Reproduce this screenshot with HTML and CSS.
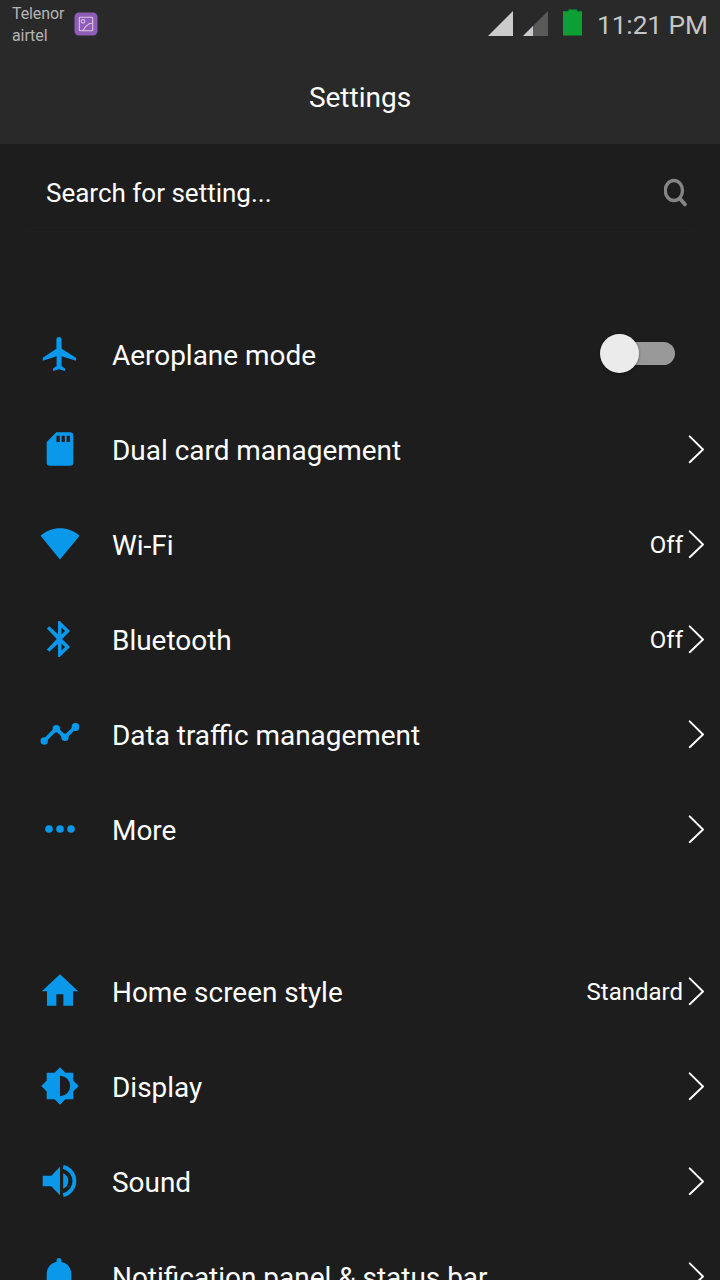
FILE: index.html
```
<!DOCTYPE html>
<html lang="en">
<head>
<meta charset="utf-8">
<title>Settings</title>
<link rel="stylesheet" href="styles.css">
</head>
<body>
<svg class="defs"><symbol id="chevron" viewBox="0 0 18 30"><path d="M1.700 1.300 15 14.500 1.700 27.200" fill="none" stroke="#fff" stroke-width="1.9" stroke-linecap="round" stroke-linejoin="round"/></symbol></svg>
<header class="header">
  <div class="status">
    <div class="carriers"><span>Telenor</span><span>airtel</span></div>
    <svg class="shot" viewBox="0 0 24 24"><rect x=".5" y=".5" width="23" height="23" rx="4.5" fill="#8f5cb9"/><g fill="none" stroke="#d6c8df" stroke-width="1.1"><rect x="5.3" y="5.3" width="13.4" height="13.4" rx=".8"/><circle cx="9" cy="9.3" r="1.8"/><path d="M9 18.5c.3-1 1.2-1 1.6-2.300C11 14 13 14.200 14 12.500 15 11.500 16.500 11.300 18.500 11.300"/></g></svg>
    <svg class="signal" viewBox="0 0 25 25"><path d="M25 0V25H0Z" fill="#cbcbcb"/></svg>
    <svg class="signal second" viewBox="0 0 25 25"><path d="M25 0V25H0Z" fill="#5b5a58"/><path d="M10 15V25H0Z" fill="#cbcbcb"/></svg>
    <svg class="battery" viewBox="0 0 19 27"><path d="M0 2.200H5.500V.4H14V2.200H19V26.500H0Z" fill="#0b9f34"/></svg>
    <span class="time">11:21 PM</span>
  </div>
  <h1 class="title">Settings</h1>
</header>
<div class="search">
  <span class="hint">Search for setting...</span>
  <svg class="glass" viewBox="0 0 24 30"><g fill="none" stroke="#858585"><ellipse cx="9.900" cy="12.500" rx="8.600" ry="10" stroke-width="3.300"/><path d="M15.800 20.500 20.900 26.300" stroke-width="4" stroke-linecap="round"/></g></svg>
</div>
<main>
  <section class="group">
    <div class="row"><svg class="icon" viewBox="0 0 40 41"><path d="M16.400 5.500C16.400 2.200 21.600 2.200 21.600 5.500V14.800L36 23.800V26.800L21.600 22.300V32L25 34.600V37L19 35.300 13 37V34.600L16.600 32V22.300L2.800 26.800V23.800L16.400 14.800Z"/></svg><span class="label">Aeroplane mode</span><span class="toggle"><span class="knob"></span></span></div>
    <div class="row"><svg class="icon" viewBox="0 0 40 41"><path fill-rule="evenodd" d="M16.300 3.300H30.300Q33.300 3.300 33.300 6.300V33.700Q33.300 36.700 30.300 36.700H9.700Q6.700 36.700 6.700 33.700V12.900ZM16.500 6.800V13H19.700V6.800ZM21.600 6.800V13H24.800V6.800ZM26.600 6.800V13H29.800V6.800Z"/></svg><span class="label">Dual card management</span><svg class="chevron"><use href="#chevron"/></svg></div>
    <div class="row"><svg class="icon" viewBox="0 0 40 41"><path d="M.600 11.700C11.500 1.700 28.500 1.700 39.600 11.700L20 35.400Z"/></svg><span class="label">Wi-Fi</span><span class="value">Off</span><svg class="chevron"><use href="#chevron"/></svg></div>
    <div class="row"><svg class="icon" viewBox="0 0 40 41"><path fill-rule="evenodd" d="M18 2H19.800L30 12.100 22.200 20 30 27.900 19.800 38H18V24.700L9.300 32.800 6.900 30.400 16.800 20 6.900 9.600 9.300 7.200 18 15.300ZM21.500 8.500V15.600L25.100 12.100ZM21.500 24.400V31.500L25.100 27.900Z"/></svg><span class="label">Bluetooth</span><span class="value">Off</span><svg class="chevron"><use href="#chevron"/></svg></div>
    <div class="row"><svg class="icon" viewBox="0 0 40 41"><path class="line" d="M4 27 16.300 14.700 25 23.300 35.300 13"/><circle cx="4.200" cy="27" r="3.700"/><circle cx="16.300" cy="14.700" r="3.700"/><circle cx="25" cy="23.300" r="3.700"/><circle cx="35.500" cy="13" r="3.900"/></svg><span class="label">Data traffic management</span><svg class="chevron"><use href="#chevron"/></svg></div>
    <div class="row"><svg class="icon" viewBox="0 0 40 41"><circle cx="9" cy="20" r="3.800"/><circle cx="20" cy="20" r="3.800"/><circle cx="31" cy="20" r="3.800"/></svg><span class="label">More</span><svg class="chevron"><use href="#chevron"/></svg></div>
  </section>
  <section class="group">
    <div class="row"><svg class="icon" viewBox="0 0 40 41"><path d="M20 3.300 38.200 20.200H33V34.800H23.400V23.300H16.400V34.800H7V20.200H1.800Z"/></svg><span class="label">Home screen style</span><span class="value">Standard</span><svg class="chevron"><use href="#chevron"/></svg></div>
    <div class="row"><svg class="icon" viewBox="0 0 40 41"><path fill-rule="evenodd" d="M20 1.300 25.400 6.700H33.300V14.600L38.700 20 33.300 25.400V33.300H25.400L20 38.700 14.600 33.300H6.700V25.400L1.300 20 6.700 14.600V6.700H14.600ZM20 9.800V30.200A10.200 10.200 0 0 0 20 9.800Z"/></svg><span class="label">Display</span><svg class="chevron"><use href="#chevron"/></svg></div>
    <div class="row"><svg class="icon" viewBox="0 0 40 41"><path d="M2.700 14.700H11.300L20 5.700V34.300L11.300 25.300H2.700ZM23.200 12.300Q28.300 14.800 28.300 20T23.200 27.700Z"/><path class="line" d="M23.200 5.800A14.600 14.600 0 0 1 23.200 34.200"/></svg><span class="label">Sound</span><svg class="chevron"><use href="#chevron"/></svg></div>
    <div class="row"><svg class="icon" viewBox="0 0 40 41"><path d="M16.500 6V4.500C16.500 1.200 21.500 1.200 21.500 4.500V6C27.500 7.300 31.300 12 31.300 18V28L35 32V34H3V32L6.700 28V18C6.700 12 10.500 7.300 16.500 6Z"/></svg><span class="label">Notification panel &amp; status bar</span><svg class="chevron"><use href="#chevron"/></svg></div>
  </section>
</main>
</body>
</html>
```
FILE: styles.css
```
* { box-sizing: border-box; }
html, body { height: 1280px; overflow: hidden; }
body { margin: 0; width: 720px; background: #1d1d1d; color: #fff; font-family: Roboto, "Liberation Sans", sans-serif; }
.defs { display: none; }
.header { height: 144px; background: #292929; }
.status { display: flex; height: 50px; padding: 0 12px; color: #c6c6c6; align-items: flex-start; }
.status > * { flex: none; }
.carriers { display: flex; flex-direction: column; width: 62px; padding-top: 3px; font-size: 16px; line-height: 22px; letter-spacing: -.1px; color: #b4b4b4; }
.shot { width: 24px; height: 24px; margin-top: 12px; }
.signal { width: 25px; height: 25px; margin: 11px 0 0 390px; }
.signal.second { margin-left: 10px; }
.battery { width: 19px; height: 27px; margin: 9px 0 0 15px; }
.time { margin: 9px 0 0 15px; font-size: 26.3px; line-height: 33px; letter-spacing: -.1px; white-space: nowrap; }
.title { margin: 0; padding-top: 31px; font-size: 28px; line-height: 33px; font-weight: 400; text-align: center; }
.search { display: flex; align-items: center; justify-content: space-between; height: 88px; margin: 0 24px; padding: 10px 8px 0 22px; border-bottom: 1px solid #202020; border-radius: 0 0 6px 6px; }
.hint { font-size: 26px; line-height: 30px; }
.glass { width: 24px; height: 30px; }
main { padding-top: 8px; }
.group { padding-top: 67px; }
.row { display: flex; align-items: center; height: 95px; padding: 0 14px 0 40px; }
.icon { width: 40px; height: 41px; margin-right: 32px; fill: #0a99ea; }
.line { fill: none; stroke: #0a99ea; stroke-width: 3.8px; }
.label { flex: 1; padding-top: 2px; font-size: 27.95px; line-height: 33px; white-space: nowrap; }
.value { font-size: 24px; line-height: 28px; margin-right: 5px; }
.chevron { width: 18px; height: 30px; }
.toggle { display: flex; align-items: center; width: 75px; height: 23px; margin: 0 31px 2px 0; border-radius: 12px; background: linear-gradient(90deg, transparent 20px, #999 20px); }
.knob { width: 39px; height: 39px; border-radius: 50%; background: #ebebeb; box-shadow: 0 1px 3px #0006; }
```
